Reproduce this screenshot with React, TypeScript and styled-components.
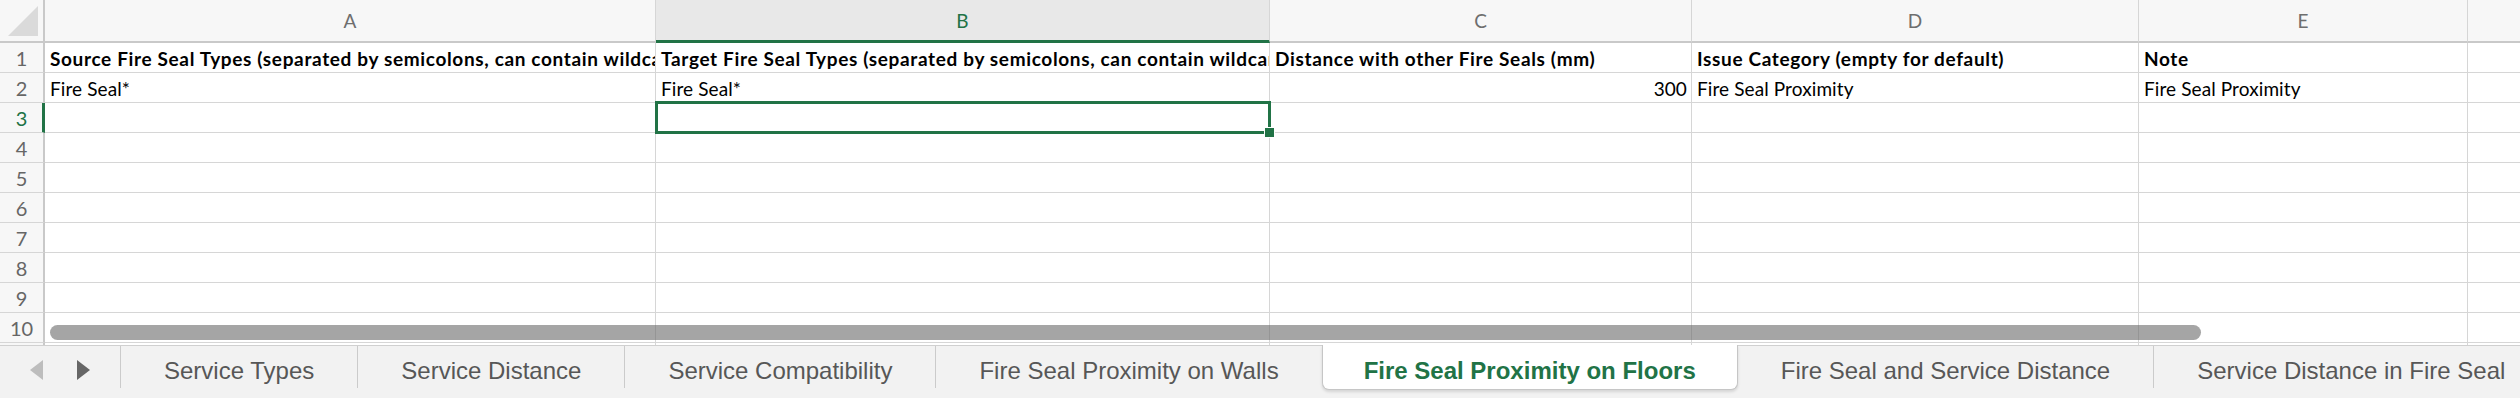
import styled, { createGlobalStyle } from "styled-components";

const GlobalStyle = createGlobalStyle`
  html, body {
    margin: 0;
    padding: 0;
    background: #ffffff;
    overflow: hidden;
  }
  * {
    box-sizing: border-box;
  }
`;

const columns = [
  { key: "A", width: 611 },
  { key: "B", width: 614 },
  { key: "C", width: 422 },
  { key: "D", width: 447 },
  { key: "E", width: 329 },
  { key: "F", width: 300 },
];

type CellData = { text?: string; bold?: boolean; align?: "left" | "right" };

const rows: CellData[][] = [
  [
    { text: "Source Fire Seal Types (separated by semicolons, can contain wildcards)", bold: true },
    { text: "Target Fire Seal Types (separated by semicolons, can contain wildcards)", bold: true },
    { text: "Distance with other Fire Seals (mm)", bold: true },
    { text: "Issue Category (empty for default)", bold: true },
    { text: "Note", bold: true },
    {},
  ],
  [
    { text: "Fire Seal*" },
    { text: "Fire Seal*" },
    { text: "300", align: "right" },
    { text: "Fire Seal Proximity" },
    { text: "Fire Seal Proximity" },
    {},
  ],
];

const sheetTabs = [
  "Service Types",
  "Service Distance",
  "Service Compatibility",
  "Fire Seal Proximity on Walls",
  "Fire Seal Proximity on Floors",
  "Fire Seal and Service Distance",
  "Service Distance in Fire Seal",
];

const activeTab = "Fire Seal Proximity on Floors";
const selectedRow = 3;
const selectedCol = "B";
const rowCount = 11;

function App() {
  return (
    <Wrapper>
      <GlobalStyle />
      <Sheet $template={columns.map((c) => `${c.width}px`).join(" ")}>
        <Corner>
          <CornerMark />
        </Corner>
        {columns.map((c) => (
          <ColHeader key={c.key} $active={c.key === selectedCol}>
            {c.key}
          </ColHeader>
        ))}
        {Array.from({ length: rowCount }, (_, i) => {
          const n = i + 1;
          const data = rows[i] || [];
          return [
            <RowHeader key={`h${n}`} $active={n === selectedRow}>
              {n}
            </RowHeader>,
            ...columns.map((c, ci) => {
              const cell = data[ci] || {};
              return (
                <Cell
                  key={`${c.key}${n}`}
                  $bold={cell.bold}
                  $align={cell.align}
                  $selected={n === selectedRow && c.key === selectedCol}>
                  {cell.text}
                </Cell>
              );
            }),
          ];
        })}
        <ScrollThumb />
      </Sheet>
      <TabBar>
        <TabNav>
          <svg width="14" height="20" viewBox="0 0 14 20">
            <polygon points="13,0 13,20 0,10" fill="#bdbdbd" />
          </svg>
          <svg width="14" height="20" viewBox="0 0 14 20">
            <polygon points="1,0 1,20 14,10" fill="#666666" />
          </svg>
        </TabNav>
        {sheetTabs.map((t, i) => {
          const active = t === activeTab;
          const nextActive = sheetTabs[i + 1] === activeTab;
          return (
            <Tab key={t} $active={active} $noDivider={nextActive}>
              {t}
            </Tab>
          );
        })}
      </TabBar>
    </Wrapper>
  );
}

const Wrapper = styled.div`
  width: 2520px;
  height: 398px;
  display: flex;
  flex-direction: column;
  overflow: hidden;
  background: #f2f2f2;
`;

const Sheet = styled.div<{ $template: string }>`
  position: relative;
  flex: 0 0 345px;
  display: grid;
  grid-template-columns: 45px ${(p) => p.$template};
  grid-template-rows: 43px;
  grid-auto-rows: 30px;
  overflow: hidden;
  background: #ffffff;
  font-family: Lato, "Liberation Sans", sans-serif;
`;

const Corner = styled.div`
  display: flex;
  align-items: flex-end;
  justify-content: flex-end;
  padding: 0 5px 5px 0;
  background: #f7f7f7;
  border-right: 2px solid #c9c9c9;
  border-bottom: 2px solid #c9c9c9;
`;

const CornerMark = styled.div`
  width: 30px;
  height: 30px;
  background: #dadada;
  clip-path: polygon(100% 0, 100% 100%, 0 100%);
`;

const ColHeader = styled.div<{ $active?: boolean }>`
  display: flex;
  align-items: center;
  justify-content: center;
  font-size: 19px;
  color: ${(p) => (p.$active ? "#217346" : "#6e6e6e")};
  background: ${(p) => (p.$active ? "#e8e8e8" : "#f7f7f7")};
  border-right: 1px solid #d6d6d6;
  border-bottom: ${(p) => (p.$active ? "3px solid #217346" : "2px solid #c9c9c9")};
  padding-top: ${(p) => (p.$active ? "1px" : "0")};
`;

const RowHeader = styled.div<{ $active?: boolean }>`
  display: flex;
  align-items: center;
  justify-content: center;
  font-size: 20px;
  color: ${(p) => (p.$active ? "#217346" : "#666666")};
  background: #f7f7f7;
  border-right: ${(p) => (p.$active ? "3px solid #217346" : "2px solid #c9c9c9")};
  border-bottom: 1px solid #d6d6d6;
  padding-left: ${(p) => (p.$active ? "1px" : "0")};
`;

const Cell = styled.div<{ $bold?: boolean; $align?: string; $selected?: boolean }>`
  position: relative;
  display: flex;
  align-items: center;
  justify-content: ${(p) => (p.$align === "right" ? "flex-end" : "flex-start")};
  padding: 1px 4px 0 5px;
  font-size: 19px;
  font-weight: ${(p) => (p.$bold ? 700 : 400)};
  letter-spacing: ${(p) => (p.$bold ? "0.65px" : "0.1px")};
  color: #000000;
  white-space: nowrap;
  overflow: ${(p) => (p.$selected ? "visible" : "hidden")};
  border-right: 1px solid #d6d6d6;
  border-bottom: 1px solid #d6d6d6;

  ${(p) =>
    p.$selected &&
    `
    z-index: 2;
    &::before {
      content: "";
      position: absolute;
      left: -1px;
      top: -2px;
      right: -2px;
      bottom: -2px;
      border: 3px solid #217346;
    }
    &::after {
      content: "";
      position: absolute;
      right: -6px;
      bottom: -6px;
      width: 9px;
      height: 9px;
      background: #217346;
      border: 1px solid #ffffff;
    }
  `}
`;

const ScrollThumb = styled.div`
  position: absolute;
  left: 50px;
  top: 325px;
  width: 2151px;
  height: 15px;
  border-radius: 8px;
  background: rgba(110, 110, 110, 0.62);
  z-index: 3;
`;

const TabBar = styled.div`
  flex: 1;
  display: flex;
  align-items: flex-start;
  background: #f2f2f2;
  border-top: 1px solid #d0d0d0;
  font-family: "Liberation Sans", Arial, sans-serif;
`;

const TabNav = styled.div`
  width: 121px;
  height: 42px;
  flex-shrink: 0;
  display: flex;
  align-items: center;
  gap: 32px;
  padding: 6px 0 0 30px;
  border-right: 1px solid #cbcbcb;
`;

const Tab = styled.div<{ $active?: boolean; $noDivider?: boolean }>`
  flex-shrink: 0;
  height: ${(p) => (p.$active ? "45px" : "42px")};
  margin-top: ${(p) => (p.$active ? "-1px" : "0")};
  display: flex;
  align-items: center;
  padding: ${(p) => (p.$active ? "7px 41px 0" : "7px 43px 0")};
  font-size: 24px;
  white-space: nowrap;
  color: ${(p) => (p.$active ? "#217346" : "#575757")};
  font-weight: ${(p) => (p.$active ? 700 : 400)};
  background: ${(p) => (p.$active ? "#ffffff" : "transparent")};
  border-right: ${(p) =>
    p.$active ? "1px solid #c6c6c6" : p.$noDivider ? "none" : "1px solid #cbcbcb"};
  border-left: ${(p) => (p.$active ? "1px solid #c6c6c6" : "none")};
  border-bottom: ${(p) => (p.$active ? "1px solid #c6c6c6" : "none")};
  border-radius: ${(p) => (p.$active ? "0 0 7px 7px" : "0")};
  box-shadow: ${(p) => (p.$active ? "0 2px 3px rgba(0, 0, 0, 0.12)" : "none")};
`;

export default App;
